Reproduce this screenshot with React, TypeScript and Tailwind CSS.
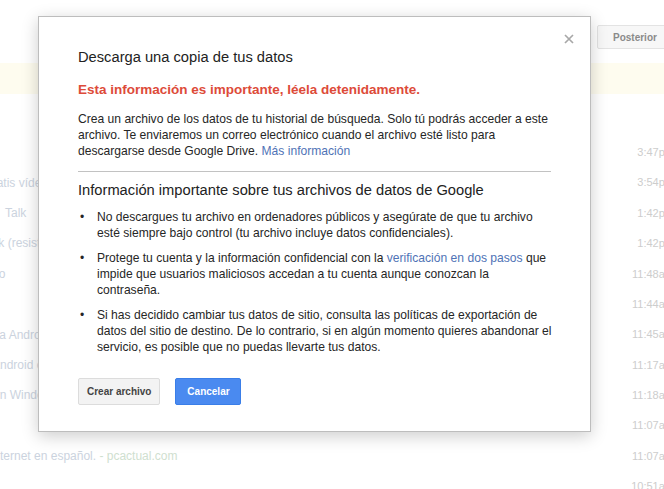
import React from "react";

const rows: { left: string; leftExtra?: string; time: string; ml: number }[] = [
  { left: "", time: "3:47pm", ml: 0 },
  { left: "gratis vídeo", time: "3:54pm", ml: -14 },
  { left: "Talk", time: "1:42pm", ml: 5 },
  { left: "Talk (resistencia)", time: "1:42pm", ml: -17 },
  { left: "Cuadro", time: "11:48am", ml: -34 },
  { left: "", time: "11:44am", ml: 0 },
  { left: "para Android", time: "11:45am", ml: -18 },
  { left: "Android cerca", time: "11:17am", ml: -8 },
  { left: "en Windows", time: "11:18am", ml: -7 },
  { left: "", time: "11:07am", ml: 0 },
  { left: "Internet en español.", leftExtra: " - pcactual.com", time: "11:07am", ml: -10 },
  { left: "", time: "10:51am", ml: 0 },
];

export default function App() {
  return (
    <div className="relative w-[664px] h-[489px] overflow-hidden bg-white font-['Liberation_Sans',Arial,sans-serif]">
      {/* background page (faded) */}
      <div className="flex justify-end pt-[25px]">
        <div className="-mr-[6px] flex h-[24px] w-[73px] items-center rounded-[2px] border border-[#e3e3e3] bg-[#f7f7f7] pl-[15px] text-[10px] font-bold text-[#8a8a8a]">
          Posterior
        </div>
      </div>
      <div className="mt-[14px] h-[31px] bg-[#fefcef]"></div>
      <div className="mt-[43px] flex flex-col">
        {rows.map((r, i) => (
          <div key={i} className="flex h-[30.4px] items-center justify-between">
            <span className="whitespace-nowrap text-[12px] text-[#cbd3de]" style={{ marginLeft: r.ml }}>
              {r.left}
              {r.leftExtra && <span className="text-[#cfe0cf]">{r.leftExtra}</span>}
            </span>
            <span className="-mr-[10px] whitespace-nowrap text-[11px] text-[#cdcdcd]">{r.time}</span>
          </div>
        ))}
      </div>

      {/* dialog */}
      <div className="absolute left-[38px] top-[16px] w-[553px] border border-[#bdbdbd] bg-white pb-[26px] pl-[39px] pr-[39px] pt-[31px] shadow-[0_4px_16px_rgba(0,0,0,0.2)]">
        <svg className="absolute left-[525px] top-[17px]" width="10" height="10" viewBox="0 0 10 10">
          <path d="M1 1 L9 9 M9 1 L1 9" stroke="#a8a8a8" strokeWidth="1.7" fill="none" />
        </svg>
        <div className="text-[14.7px] leading-[18px] text-[#222]">Descarga una copia de tus datos</div>
        <div className="mt-[16px] text-[13.5px] font-bold leading-[16px] text-[#dd4b39]">
          Esta información es importante, léela detenidamente.
        </div>
        <div className="mt-[13px] whitespace-nowrap text-[12.1px] leading-[16px] text-[#262626]">
          Crea un archivo de los datos de tu historial de búsqueda. Solo tú podrás acceder a este
          <br />
          archivo. Te enviaremos un correo electrónico cuando el archivo esté listo para
          <br />
          descargarse desde Google Drive. <span className="text-[#4f73b6]">Más información</span>
        </div>
        <div className="mt-[12px] h-px bg-[#c2c2c2]"></div>
        <div className="mt-[9px] text-[14.7px] leading-[18px] text-[#222]">
          Información importante sobre tus archivos de datos de Google
        </div>
        <div className="mt-[10px] flex flex-col gap-[9px] whitespace-nowrap text-[12.1px] leading-[16px] text-[#262626]">
          <div className="flex">
            <span className="w-[19px] shrink-0 pl-[2px]">•</span>
            <span>
              No descargues tu archivo en ordenadores públicos y asegúrate de que tu archivo
              <br />
              esté siempre bajo control (tu archivo incluye datos confidenciales).
            </span>
          </div>
          <div className="flex">
            <span className="w-[19px] shrink-0 pl-[2px]">•</span>
            <span>
              Protege tu cuenta y la información confidencial con la{" "}
              <span className="text-[#4f73b6]">verificación en dos pasos</span> que
              <br />
              impide que usuarios maliciosos accedan a tu cuenta aunque conozcan la
              <br />
              contraseña.
            </span>
          </div>
          <div className="flex">
            <span className="w-[19px] shrink-0 pl-[2px]">•</span>
            <span>
              Si has decidido cambiar tus datos de sitio, consulta las políticas de exportación de
              <br />
              datos del sitio de destino. De lo contrario, si en algún momento quieres abandonar el
              <br />
              servicio, es posible que no puedas llevarte tus datos.
            </span>
          </div>
        </div>
        <div className="mt-[23px] flex gap-[15px]">
          <div className="flex h-[27px] items-center rounded-[2px] border border-[#dcdcdc] bg-[#f3f3f3] px-[8px] text-[10px] font-bold text-[#444]">
            Crear archivo
          </div>
          <div className="flex h-[27px] min-w-[66px] items-center justify-center rounded-[2px] border border-[#3a7ee8] bg-[#4a8af0] px-[8px] text-[10px] font-bold text-white">
            Cancelar
          </div>
        </div>
      </div>
    </div>
  );
}
